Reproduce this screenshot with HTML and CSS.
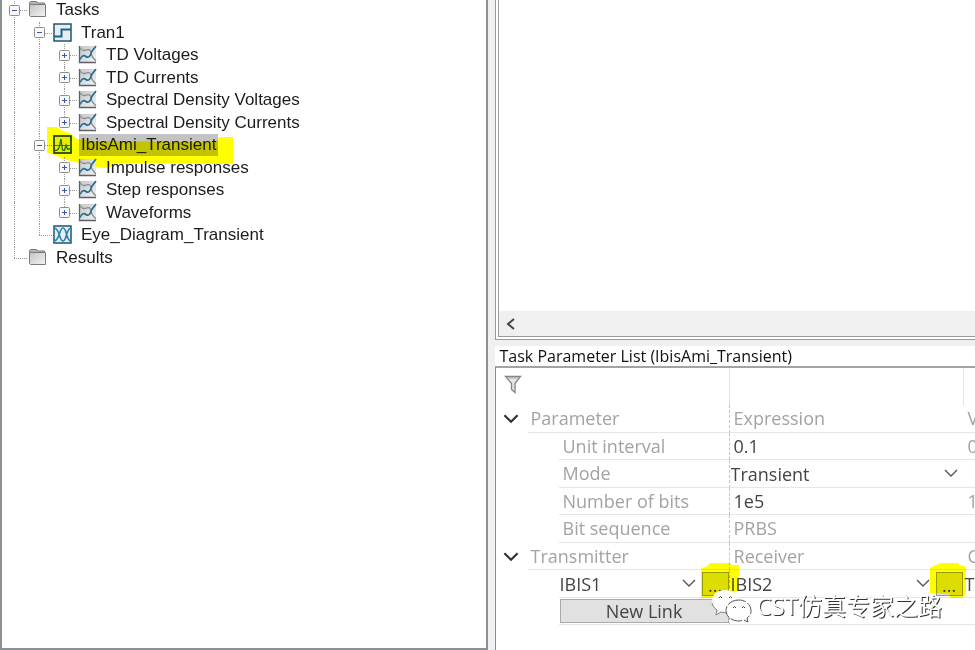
FILE: index.html
```html
<!DOCTYPE html>
<html lang="en">
<head>
<meta charset="utf-8">
<title>Task Parameter List</title>
<link rel="stylesheet" href="styles.css">
</head>
<body>
<svg class="defs" aria-hidden="true">
  <defs>
    <linearGradient id="metal" x1="0" y1="0" x2="1" y2="1">
      <stop offset="0" stop-color="#c4c4c4"/><stop offset="1" stop-color="#f4f4f4"/>
    </linearGradient>
  </defs>
  <symbol id="folder" viewBox="0 0 20 20">
    <path d="M1.5 4.5V2.5L3 1.5H8.500L10 3H16.500V5" fill="#b5b5b5" stroke="#7c7c7c"/>
    <path d="M1.500 4.500H17.500V16.500H2.500L1.500 15.500Z" fill="url(#metal)" stroke="#7c7c7c"/>
  </symbol>
  <symbol id="step" viewBox="0 0 20 20">
    <rect x="1" y="1" width="17" height="17" fill="#e9edef" stroke="#1d5775" stroke-width="1.500"/>
    <path d="M1 13.500H8.500V6.500H18" fill="none" stroke="#16688f" stroke-width="2"/>
  </symbol>
  <symbol id="plot" viewBox="0 0 20 20">
    <rect x="1" y="1" width="17" height="17" fill="url(#metal)"/>
    <path d="M1.500 1V17.500H18" fill="none" stroke="#5d6165" stroke-width="1.300"/>
    <path d="M2 3C4 6 6 6 8.500 5S13 5 13 8S15 13 18 16" fill="none" stroke="#85898b" stroke-width="1.300"/>
    <path d="M2 14.500C4 10 6 10 8 11.500S12 12 13 8.500S16 4 18 1" fill="none" stroke="#216d93" stroke-width="1.600"/>
  </symbol>
  <symbol id="impulse" viewBox="0 0 20 20">
    <rect x="1" y="1" width="17" height="17" fill="#e9edef" stroke="#16445c" stroke-width="1.700"/>
    <path d="M2 10.500H18" stroke="#477b88"/>
    <path d="M2 15.500C5 15.500 6 14 7 9L8 4L9.500 15L11.500 15.500L13 10L14.500 14H18" fill="none" stroke="#237087" stroke-width="1.300"/>
  </symbol>
  <symbol id="eye" viewBox="0 0 20 20">
    <rect x="1" y="1" width="17" height="17" fill="#e9edef" stroke="#1d5775" stroke-width="1.500"/>
    <path d="M1 3C7 3 6 16 10 16S13 3 18 3M1 16C7 16 6 3 10 3S13 16 18 16" fill="none" stroke="#2484ad" stroke-width="1.600"/>
  </symbol>
  <symbol id="minus" viewBox="0 0 11 11"><rect x=".5" y=".5" width="10" height="10" rx="1" fill="#f8f8f8" stroke="#8e8e8e"/><path d="M3 5.500H8" stroke="#3b57a5"/></symbol>
  <symbol id="plus" viewBox="0 0 11 11"><rect x=".5" y=".5" width="10" height="10" rx="1" fill="#f8f8f8" stroke="#8e8e8e"/><path d="M3 5.500H8M5.500 3V8" stroke="#3b57a5"/></symbol>
  <symbol id="chev" viewBox="0 0 14 10"><path d="M1 2L7 8L13 2" fill="none" stroke="currentColor"/></symbol>
</svg>
<main class="app">
  <nav class="tree-pane" aria-label="Tasks">
    <ul class="tree">
      <li><button class="knob" aria-label="Collapse"><svg><use href="#minus"/></svg></button><svg class="icon"><use href="#folder"/></svg><span class="label">Tasks</span></li>
      <li><i class="guide"></i><button class="knob" aria-label="Collapse"><svg><use href="#minus"/></svg></button><svg class="icon"><use href="#step"/></svg><span class="label">Tran1</span></li>
      <li><i class="guide"></i><i class="guide"></i><button class="knob" aria-label="Expand"><svg><use href="#plus"/></svg></button><svg class="icon"><use href="#plot"/></svg><span class="label">TD Voltages</span></li>
      <li><i class="guide"></i><i class="guide"></i><button class="knob" aria-label="Expand"><svg><use href="#plus"/></svg></button><svg class="icon"><use href="#plot"/></svg><span class="label">TD Currents</span></li>
      <li><i class="guide"></i><i class="guide"></i><button class="knob" aria-label="Expand"><svg><use href="#plus"/></svg></button><svg class="icon"><use href="#plot"/></svg><span class="label">Spectral Density Voltages</span></li>
      <li><i class="guide"></i><i class="guide"></i><button class="knob last" aria-label="Expand"><svg><use href="#plus"/></svg></button><svg class="icon"><use href="#plot"/></svg><span class="label">Spectral Density Currents</span></li>
      <li><i class="guide"></i><button class="knob" aria-label="Collapse"><svg><use href="#minus"/></svg></button><svg class="icon"><use href="#impulse"/></svg><span class="label selected">IbisAmi_Transient</span>
        <svg class="marker" viewBox="0 0 188 44" aria-hidden="true"><path d="M1 1L11 1L17 5L24 7L31 13L46 15L171 16L173 11H187V38L90 37L72 37L64 41L57 42L44 41L30 36L16 33L10 29L1 27Z"/></svg></li>
      <li><i class="guide"></i><i class="guide"></i><button class="knob" aria-label="Expand"><svg><use href="#plus"/></svg></button><svg class="icon"><use href="#plot"/></svg><span class="label">Impulse responses</span></li>
      <li><i class="guide"></i><i class="guide"></i><button class="knob" aria-label="Expand"><svg><use href="#plus"/></svg></button><svg class="icon"><use href="#plot"/></svg><span class="label">Step responses</span></li>
      <li><i class="guide"></i><i class="guide"></i><button class="knob last" aria-label="Expand"><svg><use href="#plus"/></svg></button><svg class="icon"><use href="#plot"/></svg><span class="label">Waveforms</span></li>
      <li><i class="guide"></i><i class="guide branch"></i><svg class="icon"><use href="#eye"/></svg><span class="label">Eye_Diagram_Transient</span></li>
      <li><i class="guide branch"></i><svg class="icon"><use href="#folder"/></svg><span class="label">Results</span></li>
    </ul>
  </nav>
  <div class="right">
    <section class="canvas" aria-label="Schematic">
      <div class="scroll"><button aria-label="Scroll left"><svg width="12" height="12" viewBox="0 0 12 12"><path d="M9 1L3 6L9 11" fill="none" stroke="#444" stroke-width="2"/></svg></button></div>
    </section>
    <section class="params">
      <h2>Task Parameter List (IbisAmi_Transient)</h2>
      <div class="sheet">
        <table>
          <colgroup><col class="c-arrow"><col class="c-indent"><col class="c-name"><col class="c-expr"><col></colgroup>
          <thead>
            <tr><th colspan="3"><button class="filter" aria-label="Filter"><svg width="18" height="19" viewBox="0 0 18 19"><path d="M1.500 1.500H16.500L11 8.500V17.500L7.500 14.500V8.500Z" fill="#e4e4e4" stroke="#858585" stroke-width="1.300"/><path d="M3 3H15" stroke="#aaa"/></svg></button></th><th></th><th></th></tr>
          </thead>
          <tbody>
            <tr><td class="bare"><button class="fold" aria-label="Collapse"><svg><use href="#chev"/></svg></button></td><td colspan="2" class="head">Parameter</td><td>Expression</td><td>V</td></tr>
            <tr><td class="bare" colspan="2"></td><td><label for="ui">Unit interval</label></td><td><input id="ui" value="0.1"></td><td>0</td></tr>
            <tr><td class="bare" colspan="2"></td><td><label for="mode">Mode</label></td><td class="tight"><div class="pick"><select id="mode"><option>Transient</option></select><svg><use href="#chev"/></svg></div></td><td></td></tr>
            <tr><td class="bare" colspan="2"></td><td><label for="bits">Number of bits</label></td><td><input id="bits" value="1e5"></td><td>1</td></tr>
            <tr><td class="bare" colspan="2"></td><td><label for="seq">Bit sequence</label></td><td><input id="seq" value="PRBS" disabled></td><td></td></tr>
            <tr><td class="bare"><button class="fold" aria-label="Collapse"><svg><use href="#chev"/></svg></button></td><td colspan="2" class="head">Transmitter</td><td>Receiver</td><td>C</td></tr>
            <tr><td class="bare" colspan="2"></td>
              <td class="tight"><div class="link"><div class="pick"><select aria-label="Transmitter"><option>IBIS1</option></select><svg><use href="#chev"/></svg></div><div class="more"><button aria-label="Browse transmitter">...</button><svg viewBox="0 0 38 36" aria-hidden="true"><path d="M0 5L5 4L9 0H29L31 2H38V26L29 35H0Z"/></svg></div></div></td>
              <td class="tight"><div class="link"><div class="pick"><select aria-label="Receiver"><option>IBIS2</option></select><svg><use href="#chev"/></svg></div><div class="more"><button aria-label="Browse receiver">...</button><svg class="second" viewBox="0 0 38 36" aria-hidden="true"><path d="M0 5L6 2L10 0H28L30 2L36 4V31L32 35H20V31L0 30Z"/></svg></div></div></td>
              <td class="tight dark">Tr</td></tr>
            <tr><td class="bare" colspan="2"></td><td class="tight"><button class="new">New Link</button></td><td></td><td></td></tr>
          </tbody>
        </table>
        <div class="watermark">
          <svg width="42" height="36" viewBox="0 0 42 36" aria-hidden="true">
            <path d="M14 2C6 2 1 7 1 13C1 17 3 20 6 22L5 27L10 24C12 25 14 25 16 25C14 17 20 11 28 11C27 5 21 2 14 2Z" fill="#fff" fill-opacity=".95"/>
            <path d="M1 15C2 18 3 20 6 22L5 27L10 24L16 25" fill="none" stroke="#666" stroke-width=".8"/>
            <path d="M28 12C20 12 15 17 15 22.500S20 33 28 33C30 33 32 32 33 32L37 34L36 30C39 28 40 26 40 23C40 17 35 12 28 12Z" fill="#fff" stroke="#555" stroke-width="1" stroke-dasharray="12 2"/>
            <path d="M8 10Q9.500 7 11 10M18 10Q19.500 7 21 10M22 20Q23.500 17 25 20M31 20Q32.500 17 34 20" fill="none" stroke="#444"/>
          </svg>
          <span>CST仿真专家之路</span>
        </div>
      </div>
    </section>
  </div>
</main>
</body>
</html>
```
FILE: styles.css
```css
* { box-sizing: border-box; }
body { margin: 0; background: #f0f0f0; overflow: hidden; }
button, input, select { font: inherit; color: inherit; border: 0; padding: 0; margin: 0; background: none; appearance: none; border-radius: 0; }
.defs { position: absolute; width: 0; height: 0; }
.app { display: grid; grid-template-columns: 1fr 1fr; min-height: 100vh; }

/* Navigation tree */
.tree-pane { background: #fff; border: 2px solid #8c9196; border-top: 0; overflow: hidden; }
.tree { list-style: none; margin: -1px 0 0; padding: 0; display: grid; grid-template-rows: repeat(12, 1fr); height: 270px; font: 17px/20px "Liberation Sans", sans-serif; color: #1c1c1c; }
.tree li { display: flex; align-items: center; min-height: 0; position: relative; }
.guide, .knob { position: relative; flex: none; width: 25px; align-self: stretch; }
.guide::before, .knob::before { content: ""; position: absolute; left: 12px; top: 0; bottom: 0; border-left: 1px dotted #9a9a9a; }
.guide.branch::before, .knob.last::before { bottom: 50%; }
.guide.branch::after, .knob::after { content: ""; position: absolute; left: 12px; right: 0; top: 50%; border-top: 1px dotted #9a9a9a; }
.knob { display: flex; align-items: center; justify-content: center; }
.knob svg { position: relative; z-index: 1; width: 11px; height: 11px; }
.icon { width: 20px; height: 20px; flex: none; margin: 0 6px 0 1px; }
.label { padding: 1px 2px; white-space: nowrap; }
.selected { background: #c3c3c3; }
.marker { position: absolute; left: 44px; top: -8px; width: 188px; height: 44px; fill: #ff0; mix-blend-mode: multiply; pointer-events: none; }

/* Right column */
.right { min-width: 0; display: flex; flex-direction: column; padding-left: 7px; }
.canvas { height: 340px; background: #fff; border: double #999; border-width: 0 0 4px 4px; display: flex; flex-direction: column; justify-content: flex-end; }
.scroll { height: 25px; background: #f0f0f0; display: flex; align-items: center; padding-left: 6px; }
.scroll button { display: flex; }
.params { flex: 1; margin-top: 6px; background: #fff; display: flex; flex-direction: column; font-family: "Open Sans", "Noto Sans CJK SC", sans-serif; }
h2 { margin: 0; padding-left: 5px; font-size: 16px; line-height: 20px; font-weight: 400; color: #111; }
.sheet { position: relative; flex: 1; border-top: 2px solid #a0a3aa; border-left: 1px solid #898e95; }
table { width: 100%; table-layout: fixed; border-collapse: separate; border-spacing: 0; font-size: 18px; line-height: 24px; color: #a3a3a3; }
.c-arrow { width: 32px; }
.c-indent { width: 31px; }
.c-name { width: 170px; }
.c-expr { width: 234px; }
th { height: 37px; padding: 0 0 4px 8px; text-align: left; border-left: 1px solid #e3e3e3; }
th:first-child { border-left: 0; }
.filter { display: flex; }
td { height: 28px; padding: 0 0 1px 4px; border-bottom: 1px solid #e6e6e6; white-space: nowrap; overflow: hidden; }
tbody tr:nth-child(even) td { height: 27px; }
td.bare { border-bottom: 0; padding-left: 7px; }
td.head { padding-left: 3px; }
td:nth-last-child(2) { border-left: 1px dashed #c4c4c4; }
td.tight { padding: 0 0 0 1px; overflow: visible; color: #444; }
td:last-child { padding-left: 5px; }
td.dark:last-child { padding-left: 2px; }
.fold { display: flex; color: #333; }
.fold svg { width: 16px; height: 11px; stroke-width: 2; }
input { display: block; width: 100%; height: 24px; color: #444; }
input:disabled { color: #a3a3a3; }
.pick { position: relative; flex: 1; min-width: 0; height: 26px; }
.pick select { display: block; width: 100%; height: 26px; }
.pick svg { position: absolute; right: 5px; top: 7px; width: 14px; height: 10px; color: #555; stroke-width: 1.4; pointer-events: none; }
.link { display: flex; align-items: center; }
.link .pick svg { right: 6px; }
.more { position: relative; width: 27px; height: 24px; }
.more button { display: block; width: 27px; height: 24px; border: 1px solid #999; background: #ddd; line-height: 24px; }
.more svg { position: absolute; left: -1px; top: -9px; width: 38px; height: 36px; fill: #ff0; mix-blend-mode: multiply; pointer-events: none; }
.more svg.second { left: -6px; }
.new { display: block; width: 100%; height: 24px; border: 1px solid #aaa; background: #e1e1e1; line-height: 22px; }
.watermark { position: absolute; left: 215px; top: 218px; display: flex; align-items: center; gap: 4px; font-size: 24px; line-height: 40px; color: #fff; text-shadow: 1px 1px 0 #333; white-space: nowrap; pointer-events: none; }
```
